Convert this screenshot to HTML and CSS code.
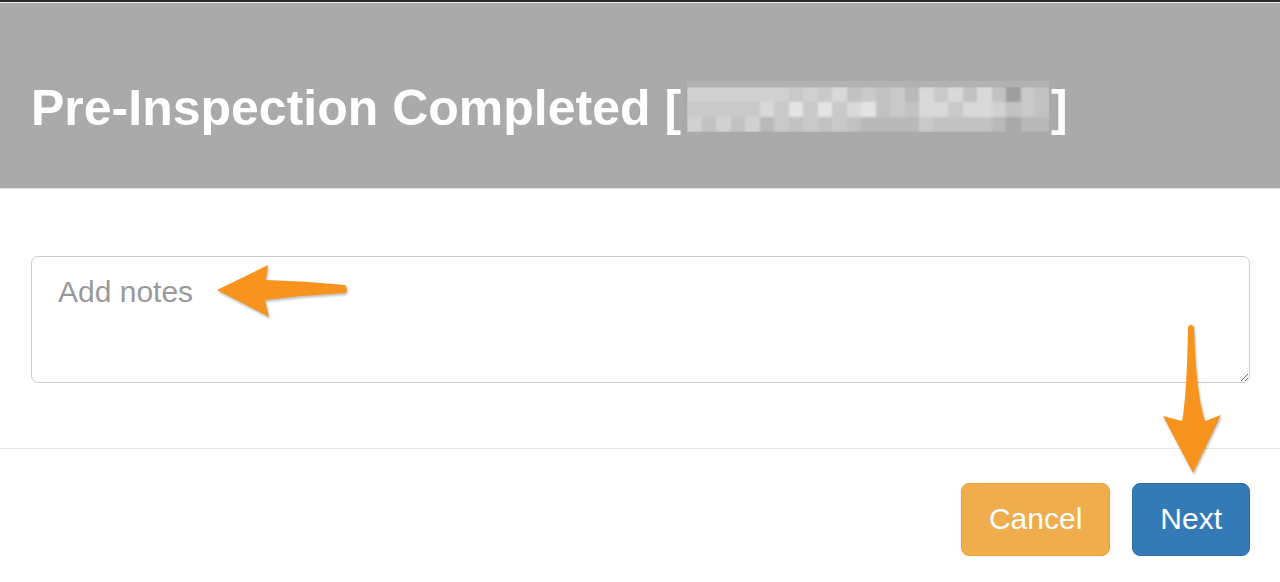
FILE: index.html
```html
<!DOCTYPE html>
<html>
<head>
	<meta charset="utf-8"/>
	<title>Pre-Inspection Completed</title>
	<link rel="stylesheet" href="styles.css">
</head>
<body>
	<div class="topbar"></div>
	<div class="modal-header">
		<h1 class="modal-title">Pre-Inspection Completed [<span class="blurred"><span class="mosaic">
			<i class="e"></i><i class="e"></i><i class="e"></i><i class="e"></i><i class="e"></i><i class="e"></i><i class="e"></i><i class="f"></i><i class="e"></i><i class="f"></i><i class="d"></i><i class="g"></i><i class="f"></i><i class="g"></i><i class="f"></i><i class="h"></i><i class="d"></i><i class="f"></i><i class="d"></i><i class="g"></i><i class="d"></i><i class="g"></i><i class="k"></i><i class="f"></i><i class="g"></i>
			<i class="f"></i><i class="f"></i><i class="f"></i><i class="f"></i><i class="f"></i><i class="d"></i><i class="f"></i><i class="c"></i><i class="f"></i><i class="c"></i><i class="f"></i><i class="d"></i><i class="c"></i><i class="g"></i><i class="f"></i><i class="g"></i><i class="d"></i><i class="d"></i><i class="f"></i><i class="d"></i><i class="d"></i><i class="e"></i><i class="g"></i><i class="f"></i><i class="g"></i>
			<i class="e"></i><i class="g"></i><i class="e"></i><i class="g"></i><i class="e"></i><i class="h"></i><i class="f"></i><i class="g"></i><i class="f"></i><i class="g"></i><i class="f"></i><i class="g"></i><i class="h"></i><i class="h"></i><i class="h"></i><i class="h"></i><i class="f"></i><i class="g"></i><i class="g"></i><i class="g"></i><i class="g"></i><i class="h"></i><i class="j"></i><i class="h"></i><i class="h"></i>
		</span></span>]</h1>
	</div>
	<div class="modal-body">
		<textarea class="notes" placeholder="Add notes"></textarea>
	</div>
	<div class="modal-footer">
		<button class="btn btn-warning">Cancel</button>
		<button class="btn btn-primary">Next</button>
	</div>

	<!-- annotation arrows drawn over the screenshot -->
	<svg class="arrows" width="1280" height="582" viewBox="0 0 1280 582">
		<path d="M217,290 L268,265 L266,280 Q305,281 345,285 Q349,289 345,293 Q305,295 265,300 L269,317 Z"/>
		<path d="M1188,327 Q1191,322 1194,327 Q1196,395 1205,421 L1221,415 L1193,473 L1163,416 L1182,421 Q1187,395 1188,327 Z"/>
	</svg>
</body>
</html>
```

FILE: styles.css
```css
html, body { height:100%; overflow:hidden; }
body { margin:0; background:#fff; font-family:"Liberation Sans", Arial, sans-serif; position:relative; }

.topbar { height:2px; background:#2b2b2b; }
.modal-header { background:#aaa; border-top:1px solid #eee; border-bottom:1px solid #e5e5e5; padding:78px 28px 52px 31px; }
.modal-title { margin:0; color:#fff; font-size:50px; font-weight:bold; line-height:55px; white-space:nowrap; }

.blurred { display:inline-block; overflow:hidden; vertical-align:-7px; width:362px; height:45px; margin:0 2px 0 6px; box-shadow:0 -6px 0 #b2b2b2; }
.mosaic { display:grid; grid-template-columns:repeat(25, 14.5px); grid-template-rows:repeat(3, 15px); filter:blur(0.8px); }
.mosaic i { display:block; }
.mosaic .c { background:#e4e4e4; }
.mosaic .d { background:#d9d9d9; }
.mosaic .e { background:#d1d1d1; }
.mosaic .f { background:#c9c9c9; }
.mosaic .g { background:#c2c2c2; }
.mosaic .h { background:#b9b9b9; }
.mosaic .j { background:#a9a9a9; }
.mosaic .k { background:#9e9e9e; }

.modal-body { padding:67px 30px 65px 31px; }
.notes { display:block; box-sizing:border-box; width:100%; height:127px; margin:0; padding:13px 26px; border:1px solid #ccc; border-radius:7px; font-family:inherit; font-size:30px; line-height:43px; color:#555; resize:vertical; }
.notes::placeholder { color:#999; }

.modal-footer { border-top:1px solid #e5e5e5; padding:34px 30px 0; display:flex; justify-content:flex-end; gap:22px; }
.btn { font-family:inherit; font-size:30px; line-height:40px; padding:15px 27px 16px; border:1px solid transparent; border-radius:8px; color:#fff; }
.btn-warning { background:#f0ad4e; border-color:#eea236; }
.btn-primary { background:#337ab7; border-color:#2e6da4; }

.arrows { position:absolute; top:0; left:0; pointer-events:none; }
.arrows path { fill:#f8941d; filter:drop-shadow(1px 2px 1px rgba(0,0,0,0.25)); }
```
